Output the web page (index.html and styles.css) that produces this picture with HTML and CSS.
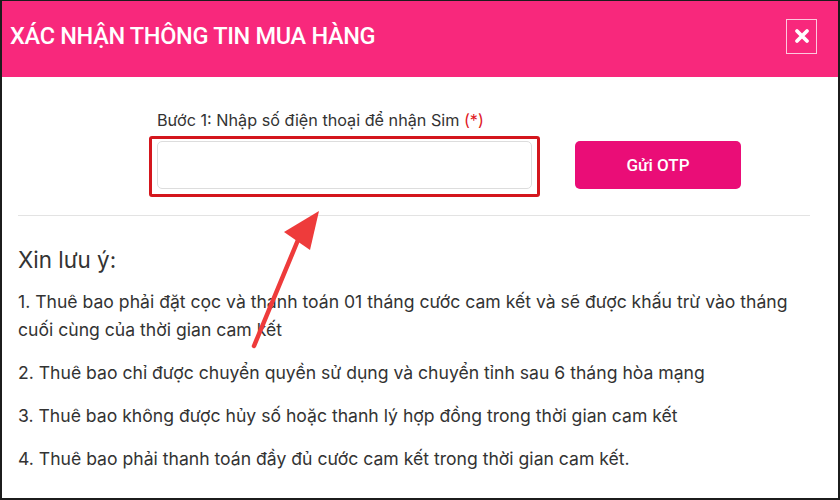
FILE: index.html
```html
<!DOCTYPE html>
<html lang="vi">
<head>
<meta charset="utf-8">
<link rel="stylesheet" href="styles.css">
</head>
<body>
<div class="frame">
  <div class="header">
    <h1 class="title">XÁC NHẬN THÔNG TIN MUA HÀNG</h1>
    <button class="close" aria-label="Đóng">
      <svg width="16" height="16" viewBox="0 0 16 16"><path d="M3 3 L13 13 M13 3 L3 13" stroke="#fff" stroke-width="3.8" stroke-linecap="round"/></svg>
    </button>
  </div>
  <div class="body">
    <div class="form-row">
      <div class="field">
        <label class="label">Bước 1: Nhập số điện thoại để nhận Sim <span class="req">(*)</span></label>
        <div class="highlight"><input class="input" type="text"></div>
      </div>
      <button class="otp">Gửi OTP</button>
    </div>
    <hr class="sep">
    <h2 class="note-title">Xin lưu ý:</h2>
    <p class="note">1. Thuê bao phải đặt cọc và thanh toán 01 tháng cước cam kết và sẽ được khấu trừ vào tháng cuối cùng của thời gian cam kết</p>
    <p class="note">2. Thuê bao chỉ được chuyển quyền sử dụng và chuyển tỉnh sau 6 tháng hòa mạng</p>
    <p class="note">3. Thuê bao không được hủy số hoặc thanh lý hợp đồng trong thời gian cam kết</p>
    <p class="note">4. Thuê bao phải thanh toán đầy đủ cước cam kết trong thời gian cam kết.</p>
  </div>
  <svg class="arrow" width="840" height="500" viewBox="0 0 840 500">
    <line x1="254" y1="346" x2="298" y2="240" stroke="#ee3b3b" stroke-width="4.5" stroke-linecap="round"/>
    <polygon points="319,211 284,232 310,250" fill="#ee3b3b"/>
  </svg>
</div>
</body>
</html>
```

FILE: styles.css
```css
* { box-sizing: border-box; }
html, body { margin: 0; padding: 0; background: #fff; }
.frame {
  position: relative;
  width: 840px;
  height: 500px;
  border: 2px solid #1c1c1c;
  border-top-width: 1px;
  overflow: hidden;
  font-family: Inter, "Noto Sans", sans-serif;
  color: #333;
}
.header {
  height: 76px;
  background: #f8287c;
  display: flex;
  align-items: center;
  justify-content: space-between;
  padding: 0 21px 6px 8px;
}
.title {
  margin: 0;
  font-family: Roboto, "Liberation Sans", sans-serif;
  font-weight: 500;
  font-size: 23.5px;
  letter-spacing: -0.3px;
  color: #fff;
}
.close {
  width: 31px;
  height: 35px;
  margin-top: 0;
  background: transparent;
  border: 1px solid rgba(255,255,255,0.75);
  display: flex;
  align-items: center;
  justify-content: center;
  padding: 0;
}
.body { padding: 33px 28px 0 16px; }
.form-row {
  display: flex;
  align-items: flex-end;
  padding-left: 131px;
}
.field { display: flex; flex-direction: column; }
.label {
  font-size: 16.2px;
  color: #333;
  margin-left: 8px;
  margin-bottom: 6px;
}
.req { color: #e0191f; }
.highlight {
  border: 3px solid #d4161d;
  border-radius: 3px;
  padding: 2px 5px 5px 5px;
  width: 391px;
}
.input {
  display: block;
  width: 100%;
  height: 48px;
  border: 1px solid #ddd;
  border-radius: 5px;
  background: #fff;
}
.otp {
  margin-left: 35px;
  margin-bottom: 8px;
  width: 166px;
  height: 48px;
  border: none;
  border-radius: 5px;
  background: #ea0d77;
  color: #fff;
  font-family: Roboto, "Liberation Sans", sans-serif;
  font-weight: 500;
  font-size: 17px;
}
.sep {
  margin: 18px 0 0 0;
  border: none;
  border-top: 1px solid #e3e3e3;
  width: 792px;
}
.note-title {
  margin: 30px 0 15px 0;
  font-weight: 400;
  font-size: 22.4px;
  color: #333;
}
.note {
  margin: 0 0 15px 0;
  font-size: 17.6px;
  line-height: 28px;
  color: #333;
}
.arrow { position: absolute; left: -2px; top: -1px; pointer-events: none; }
```
